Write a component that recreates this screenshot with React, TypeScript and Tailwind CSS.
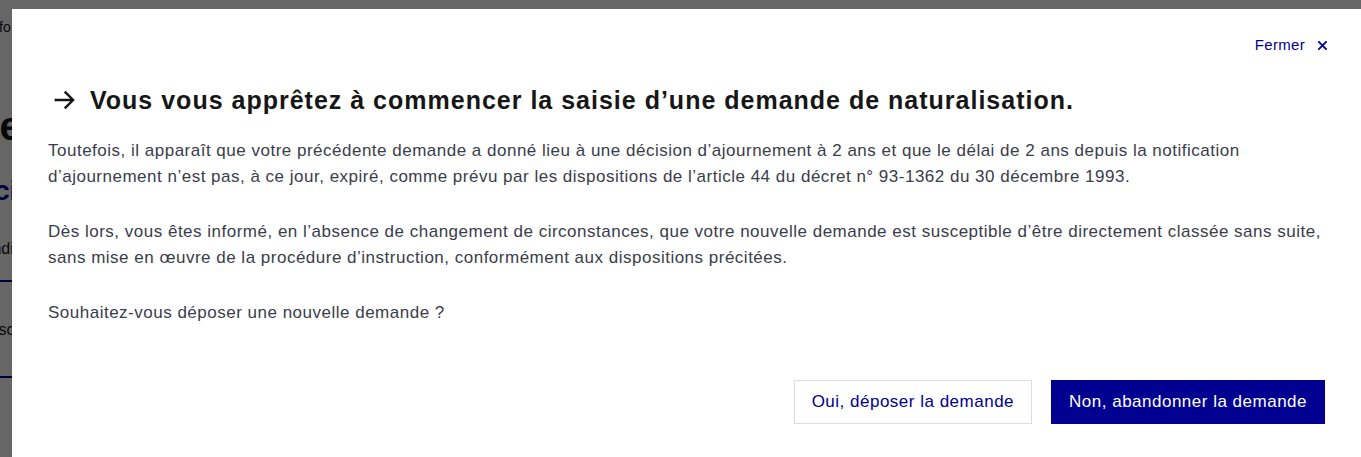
import React from "react";

function ArrowRight() {
  return (
    <svg width="26" height="26" viewBox="0 0 24 24" fill="none" className="shrink-0">
      <path d="M3.5 12H19M12.5 5L19.5 12L12.5 19" stroke="#161616" strokeWidth="2.2" strokeLinecap="square" />
    </svg>
  );
}

function CloseIcon() {
  return (
    <svg width="11" height="11" viewBox="0 0 12 12" fill="none">
      <path d="M1.5 1.5L10.5 10.5M10.5 1.5L1.5 10.5" stroke="#000091" strokeWidth="2" />
    </svg>
  );
}

export default function App() {
  return (
    <div className="relative h-[457px] w-full overflow-hidden bg-white font-['Liberation_Sans',Arial,sans-serif] text-[#161616]">
      {/* page behind the modal */}
      <div className="flex flex-col">
        <p className="-ml-[1px] mt-[18px] text-[14px] leading-[18px]">fo</p>
        <p className="-ml-[25px] mt-[66px] text-[40px] font-bold leading-[48px]">Le</p>
        <p className="-ml-[6px] mt-[23px] text-[28px] font-bold leading-[36px] text-[#000091]">ci</p>
        <p className="-ml-[12px] mt-[28px] text-[16px] leading-[24px]">Indic</p>
        <div className="mt-[19px] h-[2px] bg-[#000091]" />
        <p className="-ml-[13px] mt-[36px] text-[16px] leading-[24px]">Dsc</p>
        <div className="mt-[34px] h-[2px] bg-[#000091]" />
      </div>

      {/* overlay + modal */}
      <div className="absolute inset-0 bg-black/60">
        <div className="ml-[12px] mt-[9px] h-[460px] bg-white pl-[36px] pr-[33px] pt-[24px]">
          <div className="flex justify-end">
            <button className="flex h-[24px] items-center gap-[12px] text-[15px] tracking-[0.3px] text-[#000091]">
              <span>Fermer</span>
              <CloseIcon />
            </button>
          </div>
          <h1 className="mt-[27px] flex items-center gap-[12px] pl-[4px] text-[25px] font-bold leading-[32px] tracking-[1px] text-[#161616]">
            <ArrowRight />
            <span>Vous vous apprêtez à commencer la saisie d’une demande de naturalisation.</span>
          </h1>
          <div className="mt-[22px] pr-[3px] text-[17px] leading-[26px] tracking-[0.5px] text-[#3a3d4a]">
            <p>
              Toutefois, il apparaît que votre précédente demande a donné lieu à une décision d’ajournement à 2 ans et que le délai de 2 ans depuis la notification d’ajournement n’est pas, à ce jour, expiré, comme prévu par les dispositions de l’article 44 du décret n° 93-1362 du 30 décembre 1993.
            </p>
            <p className="mt-[29px]">
              Dès lors, vous êtes informé, en l’absence de changement de circonstances, que votre nouvelle demande est susceptible d’être directement classée sans suite, sans mise en œuvre de la procédure d’instruction, conformément aux dispositions précitées.
            </p>
            <p className="mt-[29px]">Souhaitez-vous déposer une nouvelle demande ?</p>
          </div>
          <div className="mt-[54px] flex justify-end gap-[19px] pr-[3px]">
            <button className="h-[44px] border border-[#dddddd] bg-white px-[17px] text-[17px] tracking-[0.5px] text-[#000091]">
              Oui, déposer la demande
            </button>
            <button className="h-[44px] bg-[#000091] px-[18px] text-[17px] tracking-[0.5px] text-white">
              Non, abandonner la demande
            </button>
          </div>
        </div>
      </div>
    </div>
  );
}
